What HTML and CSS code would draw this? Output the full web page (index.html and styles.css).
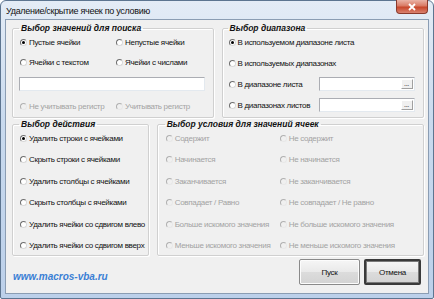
FILE: index.html
```html
<!DOCTYPE html>
<html>
<head>
    <meta charset="utf-8">
    <title>Удаление/скрытие ячеек по условию</title>
    <link rel="stylesheet" href="styles.css">
</head>
<body>
<div class="window">
    <div class="titlebar">
        <span class="title">Удаление/скрытие ячеек по условию</span>
        <div class="close">
            <svg width="10" height="8" viewBox="0 0 10 8"><path d="M2 1 L8 7 M8 1 L2 7" stroke="#fff" stroke-width="1.8"/></svg>
        </div>
    </div>
    <div class="client">
        <div class="row top">
            <fieldset class="group search">
                <legend>Выбор значений для поиска</legend>
                <div class="cols">
                    <label class="opt"><i class="radio on"></i>Пустые ячейки</label>
                    <label class="opt"><i class="radio"></i>Непустые ячейки</label>
                    <label class="opt"><i class="radio"></i>Ячейки с текстом</label>
                    <label class="opt"><i class="radio"></i>Ячейки с числами</label>
                </div>
                <div class="textbox"></div>
                <div class="cols">
                    <label class="opt off"><i class="radio"></i>Не учитывать регистр</label>
                    <label class="opt off"><i class="radio"></i>Учитывать регистр</label>
                </div>
            </fieldset>
            <fieldset class="group range">
                <legend>Выбор диапазона</legend>
                <label class="opt"><i class="radio on"></i>В используемом диапазоне листа</label>
                <label class="opt"><i class="radio"></i>В используемых диапазонах</label>
                <div class="line">
                    <label class="opt"><i class="radio"></i>В диапазоне листа</label>
                    <div class="refbox"><span class="dots">...</span></div>
                </div>
                <div class="line">
                    <label class="opt"><i class="radio"></i>В диапазонах листов</label>
                    <div class="refbox"><span class="dots">...</span></div>
                </div>
            </fieldset>
        </div>
        <div class="row mid">
            <fieldset class="group action">
                <legend>Выбор действия</legend>
                <label class="opt"><i class="radio on"></i>Удалить строки с ячейками</label>
                <label class="opt"><i class="radio"></i>Скрыть строки с ячейками</label>
                <label class="opt"><i class="radio"></i>Удалить столбцы с ячейками</label>
                <label class="opt"><i class="radio"></i>Скрыть столбцы с ячейками</label>
                <label class="opt"><i class="radio"></i>Удалить ячейки со сдвигом влево</label>
                <label class="opt"><i class="radio"></i>Удалить ячейки со сдвигом вверх</label>
            </fieldset>
            <fieldset class="group cond">
                <legend>Выбор условия для значений ячеек</legend>
                <div class="cols">
                    <label class="opt off"><i class="radio"></i>Содержит</label>
                    <label class="opt off"><i class="radio"></i>Не содержит</label>
                    <label class="opt off"><i class="radio"></i>Начинается</label>
                    <label class="opt off"><i class="radio"></i>Не начинается</label>
                    <label class="opt off"><i class="radio"></i>Заканчивается</label>
                    <label class="opt off"><i class="radio"></i>Не заканчивается</label>
                    <label class="opt off"><i class="radio"></i>Совпадает / Равно</label>
                    <label class="opt off"><i class="radio"></i>Не совпадает / Не равно</label>
                    <label class="opt off"><i class="radio"></i>Больше искомого значения</label>
                    <label class="opt off"><i class="radio"></i>Не больше искомого значения</label>
                    <label class="opt off"><i class="radio"></i>Меньше искомого значения</label>
                    <label class="opt off"><i class="radio"></i>Не меньше искомого значения</label>
                </div>
            </fieldset>
        </div>
        <div class="footer">
            <span class="link">www.macros-vba.ru</span>
            <div class="buttons">
                <div class="btn run">Пуск</div>
                <div class="btn def">Отмена</div>
            </div>
        </div>
    </div>
</div>
</body>
</html>
```

FILE: styles.css
```css
*{
    margin: 0;
    padding: 0;
    box-sizing: border-box;
}
body{
    font-family: "Liberation Sans", Arial, sans-serif;
    font-size: 8px;
    letter-spacing: -0.3px;
    color: #111;
    background: #fff;
}
.window{
    width: 434px;
    height: 299px;
    border: 1px solid #5d7590;
    border-radius: 6px 6px 2px 2px;
    background: linear-gradient(#e4ecf6, #c9daee 40%, #bcd0ea);
    padding: 0 4px 4px 4px;
    display: flex;
    flex-direction: column;
}
.titlebar{
    height: 18px;
    display: flex;
    align-items: center;
    justify-content: space-between;
}
.title{
    font-size: 9px;
    letter-spacing: -0.3px;
    padding-left: 1px;
    padding-top: 1px;
}
.close{
    width: 32px;
    height: 14px;
    align-self: flex-start;
    margin-top: -1px;
    margin-right: 1px;
    border: 1px solid #8a3a2c;
    border-top: none;
    border-radius: 0 0 4px 4px;
    background: linear-gradient(#eab3a6, #d97a64 45%, #c8472b 55%, #d98270);
    display: flex;
    align-items: center;
    justify-content: center;
}
.client{
    flex: 1;
    border: 1px solid #8b9db3;
    background: #f0f0f0;
    padding: 3px 4px 0 6px;
    display: flex;
    flex-direction: column;
}
.row{
    display: flex;
    gap: 8px;
}
.group{
    min-width: 0;
    border: 1px solid #d0d0d0;
    box-shadow: inset 1px 1px 0 #fff, 1px 1px 0 #fff;
    border-radius: 2px;
}
.group legend{
    font-weight: bold;
    font-style: italic;
    font-size: 8.5px;
    letter-spacing: 0;
    line-height: 10px;
    padding: 0 2px;
    margin-left: -1px;
}
.search{
    width: 202px;
    height: 95px;
    padding: 0 7px;
}
.range{
    width: 203px;
    height: 95px;
    padding: 0 6px;
    display: flex;
    flex-direction: column;
    gap: 3px;
}
.mid{
    margin-top: 1px;
}
.action{
    width: 137px;
    height: 137px;
    padding: 0 7px;
    display: flex;
    flex-direction: column;
    gap: 3.5px;
}
.cond{
    width: 268px;
    height: 137px;
    padding: 0 8px;
}
.cols{
    display: grid;
    grid-template-columns: 96px 1fr;
    row-gap: 2px;
}
.cond .cols{
    grid-template-columns: 114px 1fr;
    row-gap: 3.5px;
}
.opt{
    height: 18px;
    display: flex;
    align-items: center;
    white-space: nowrap;
}
.opt.off{
    color: #a3a3a3;
}
.radio{
    flex: none;
    width: 7px;
    height: 7px;
    border-radius: 50%;
    border: 1px solid;
    border-color: #6e6e6e #d8d8d8 #d8d8d8 #6e6e6e;
    background: #fff;
    margin-right: 2px;
    display: flex;
    align-items: center;
    justify-content: center;
}
.radio.on::after{
    content: "";
    width: 3px;
    height: 3px;
    border-radius: 50%;
    background: #000;
}
.off .radio{
    background: #f0f0f0;
    border-color: #b0b0b0 #e8e8e8 #e8e8e8 #b0b0b0;
}
.textbox{
    height: 14px;
    margin: 6px 1px 6px -1px;
    background: #fff;
    border: 1px solid;
    border-color: #abadb3 #e3e9ef #e3e9ef #abadb3;
}
.line{
    display: flex;
    align-items: center;
}
.line .opt{
    width: 90px;
}
.refbox{
    width: 96px;
    height: 14px;
    background: #fff;
    border: 1px solid;
    border-color: #abadb3 #e3e9ef #e3e9ef #abadb3;
    display: flex;
    justify-content: flex-end;
    padding: 1px;
}
.dots{
    width: 12px;
    height: 10px;
    font-size: 7px;
    line-height: 8px;
    text-align: center;
    background: #f0f0f0;
    border: 1px solid;
    border-color: #fff #a0a0a0 #a0a0a0 #fff;
}
.footer{
    flex: 1;
    display: flex;
    align-items: flex-start;
    justify-content: space-between;
    padding: 3px 3px 0 1px;
}
.link{
    margin-top: 12px;
    font-size: 10px;
    letter-spacing: 0;
    font-weight: bold;
    font-style: italic;
    color: #3a7fd5;
}
.buttons{
    display: flex;
    gap: 4px;
}
.btn{
    width: 57px;
    height: 26px;
    border: 1px solid #8a8a8a;
    border-radius: 2px;
    background: linear-gradient(#f6f6f6, #e9e9e9 50%, #dcdcdc 50%, #d3d3d3);
    box-shadow: inset 0 0 0 1px #fcfcfc;
    display: flex;
    align-items: center;
    justify-content: center;
}
.btn.run{
    width: 61px;
}
.btn.def{
    border: 2px solid #3a3a3a;
    box-shadow: inset 0 0 0 1px #7a7a7a;
}
```
